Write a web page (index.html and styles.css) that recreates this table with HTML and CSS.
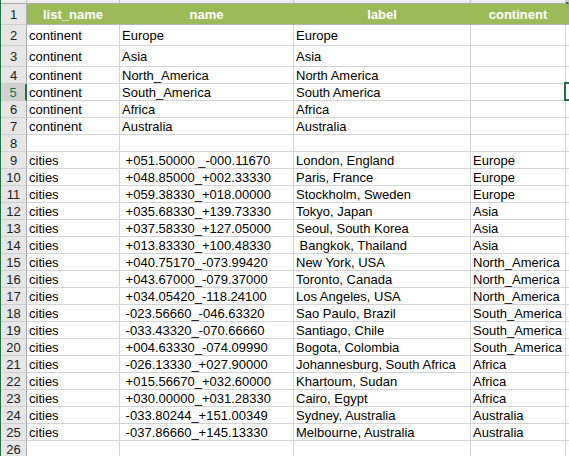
FILE: index.html
```html
<!DOCTYPE html>
<html>
<head>
<meta charset="utf-8">
<link rel="stylesheet" href="styles.css">
</head>
<body>
<div class="sheet">
  <div class="row"><div class="top"></div><div class="top"></div><div class="top"></div><div class="top"></div><div class="top"></div><div class="top sel-col"></div></div>

  <div class="row tall"><div class="rh">1</div><div class="c h">list_name</div><div class="c h">name</div><div class="c h">label</div><div class="c h">continent</div><div class="c h"></div></div>

  <div class="row tall"><div class="rh">2</div><div class="c">continent</div><div class="c">Europe</div><div class="c">Europe</div><div class="c"></div><div class="c"></div></div>
  <div class="row tall"><div class="rh">3</div><div class="c">continent</div><div class="c">Asia</div><div class="c">Asia</div><div class="c"></div><div class="c"></div></div>
  <div class="row"><div class="rh">4</div><div class="c">continent</div><div class="c">North_America</div><div class="c">North America</div><div class="c"></div><div class="c"></div></div>
  <div class="row"><div class="rh sel">5</div><div class="c">continent</div><div class="c">South_America</div><div class="c">South America</div><div class="c"></div><div class="c active"></div></div>
  <div class="row"><div class="rh">6</div><div class="c">continent</div><div class="c">Africa</div><div class="c">Africa</div><div class="c"></div><div class="c"></div></div>
  <div class="row"><div class="rh">7</div><div class="c">continent</div><div class="c">Australia</div><div class="c">Australia</div><div class="c"></div><div class="c"></div></div>
  <div class="row"><div class="rh">8</div><div class="c"></div><div class="c"></div><div class="c"></div><div class="c"></div><div class="c"></div></div>
  <div class="row"><div class="rh">9</div><div class="c">cities</div><div class="c"> +051.50000 _-000.11670</div><div class="c">London, England</div><div class="c">Europe</div><div class="c"></div></div>
  <div class="row"><div class="rh">10</div><div class="c">cities</div><div class="c"> +048.85000_+002.33330</div><div class="c">Paris, France</div><div class="c">Europe</div><div class="c"></div></div>
  <div class="row"><div class="rh">11</div><div class="c">cities</div><div class="c"> +059.38330_+018.00000</div><div class="c">Stockholm, Sweden</div><div class="c">Europe</div><div class="c"></div></div>
  <div class="row"><div class="rh">12</div><div class="c">cities</div><div class="c"> +035.68330_+139.73330</div><div class="c">Tokyo, Japan</div><div class="c">Asia</div><div class="c"></div></div>
  <div class="row"><div class="rh">13</div><div class="c">cities</div><div class="c"> +037.58330_+127.05000</div><div class="c">Seoul, South Korea</div><div class="c">Asia</div><div class="c"></div></div>
  <div class="row"><div class="rh">14</div><div class="c">cities</div><div class="c"> +013.83330_+100.48330</div><div class="c"> Bangkok, Thailand</div><div class="c">Asia</div><div class="c"></div></div>
  <div class="row"><div class="rh">15</div><div class="c">cities</div><div class="c"> +040.75170_-073.99420</div><div class="c">New York, USA</div><div class="c">North_America</div><div class="c"></div></div>
  <div class="row"><div class="rh">16</div><div class="c">cities</div><div class="c"> +043.67000_-079.37000</div><div class="c">Toronto, Canada</div><div class="c">North_America</div><div class="c"></div></div>
  <div class="row"><div class="rh">17</div><div class="c">cities</div><div class="c"> +034.05420_-118.24100</div><div class="c">Los Angeles, USA</div><div class="c">North_America</div><div class="c"></div></div>
  <div class="row"><div class="rh">18</div><div class="c">cities</div><div class="c"> -023.56660_-046.63320</div><div class="c">Sao Paulo, Brazil</div><div class="c">South_America</div><div class="c"></div></div>
  <div class="row"><div class="rh">19</div><div class="c">cities</div><div class="c"> -033.43320_-070.66660</div><div class="c">Santiago, Chile</div><div class="c">South_America</div><div class="c"></div></div>
  <div class="row"><div class="rh">20</div><div class="c">cities</div><div class="c"> +004.63330_-074.09990</div><div class="c">Bogota, Colombia</div><div class="c">South_America</div><div class="c"></div></div>
  <div class="row"><div class="rh">21</div><div class="c">cities</div><div class="c"> -026.13330_+027.90000</div><div class="c">Johannesburg, South Africa</div><div class="c">Africa</div><div class="c"></div></div>
  <div class="row"><div class="rh">22</div><div class="c">cities</div><div class="c"> +015.56670_+032.60000</div><div class="c">Khartoum, Sudan</div><div class="c">Africa</div><div class="c"></div></div>
  <div class="row"><div class="rh">23</div><div class="c">cities</div><div class="c"> +030.00000_+031.28330</div><div class="c">Cairo, Egypt</div><div class="c">Africa</div><div class="c"></div></div>
  <div class="row"><div class="rh">24</div><div class="c">cities</div><div class="c"> -033.80244_+151.00349</div><div class="c">Sydney, Australia</div><div class="c">Australia</div><div class="c"></div></div>
  <div class="row"><div class="rh">25</div><div class="c">cities</div><div class="c"> -037.86660_+145.13330</div><div class="c">Melbourne, Australia</div><div class="c">Australia</div><div class="c"></div></div>
  <div class="row"><div class="rh">26</div><div class="c"></div><div class="c"></div><div class="c"></div><div class="c"></div><div class="c"></div></div>
</div>
</body>
</html>
```

FILE: styles.css
```css
* { box-sizing: border-box; }
html, body {
  margin: 0;
  padding: 0;
  background: #fff;
  overflow: hidden;
  width: 569px;
  height: 456px;
}
.sheet {
  display: grid;
  grid-template-columns: 26px 93px 174px 177px 95px minmax(0, 1fr);
  grid-template-rows: 4px 21px 21px 21px repeat(23, 17px);
  border-left: 1px solid #217346;
  width: 569px;
  height: 456px;
  overflow: hidden;
  font-family: "Liberation Sans", Arial, sans-serif;
  font-size: 13px;
  color: #000;
}
.row { display: contents; }
.top {
  background: #eeeeee;
  border-right: 1px solid #c4c4c4;
  border-bottom: 1px solid #ababab;
}
.top.sel-col {
  border-bottom: 2px solid #217346;
  background: #d2d2d2;
}
.rh {
  background: #e6e6e6;
  border-right: 1px solid #ababab;
  border-bottom: 1px solid #cfcfcf;
  display: flex;
  align-items: flex-end;
  justify-content: center;
  line-height: 13px;
  padding-bottom: 1px;
  color: #222;
}
.rh.sel {
  background: #d2d2d2;
  color: #217346;
  border-right: 2px solid #217346;
}
.c {
  border-right: 1px solid #d4d4d4;
  border-bottom: 1px solid #d4d4d4;
  display: flex;
  align-items: flex-end;
  padding: 0 2px 1px 2px;
  line-height: 13px;
  white-space: pre;
  overflow: hidden;
}
.row.tall .c,
.row.tall .rh {
  padding-bottom: 3px;
}
.c.h {
  background: #9bbb59;
  color: #fff;
  font-weight: bold;
  justify-content: center;
  border-right-color: #9bbb59;
  border-bottom-color: #b5b5b5;
}
.c.active {
  position: relative;
  overflow: visible;
}
.c.active::after {
  content: "";
  position: absolute;
  left: -2px;
  top: -2px;
  bottom: -1px;
  right: -20px;
  border: 2px solid #217346;
}
```
